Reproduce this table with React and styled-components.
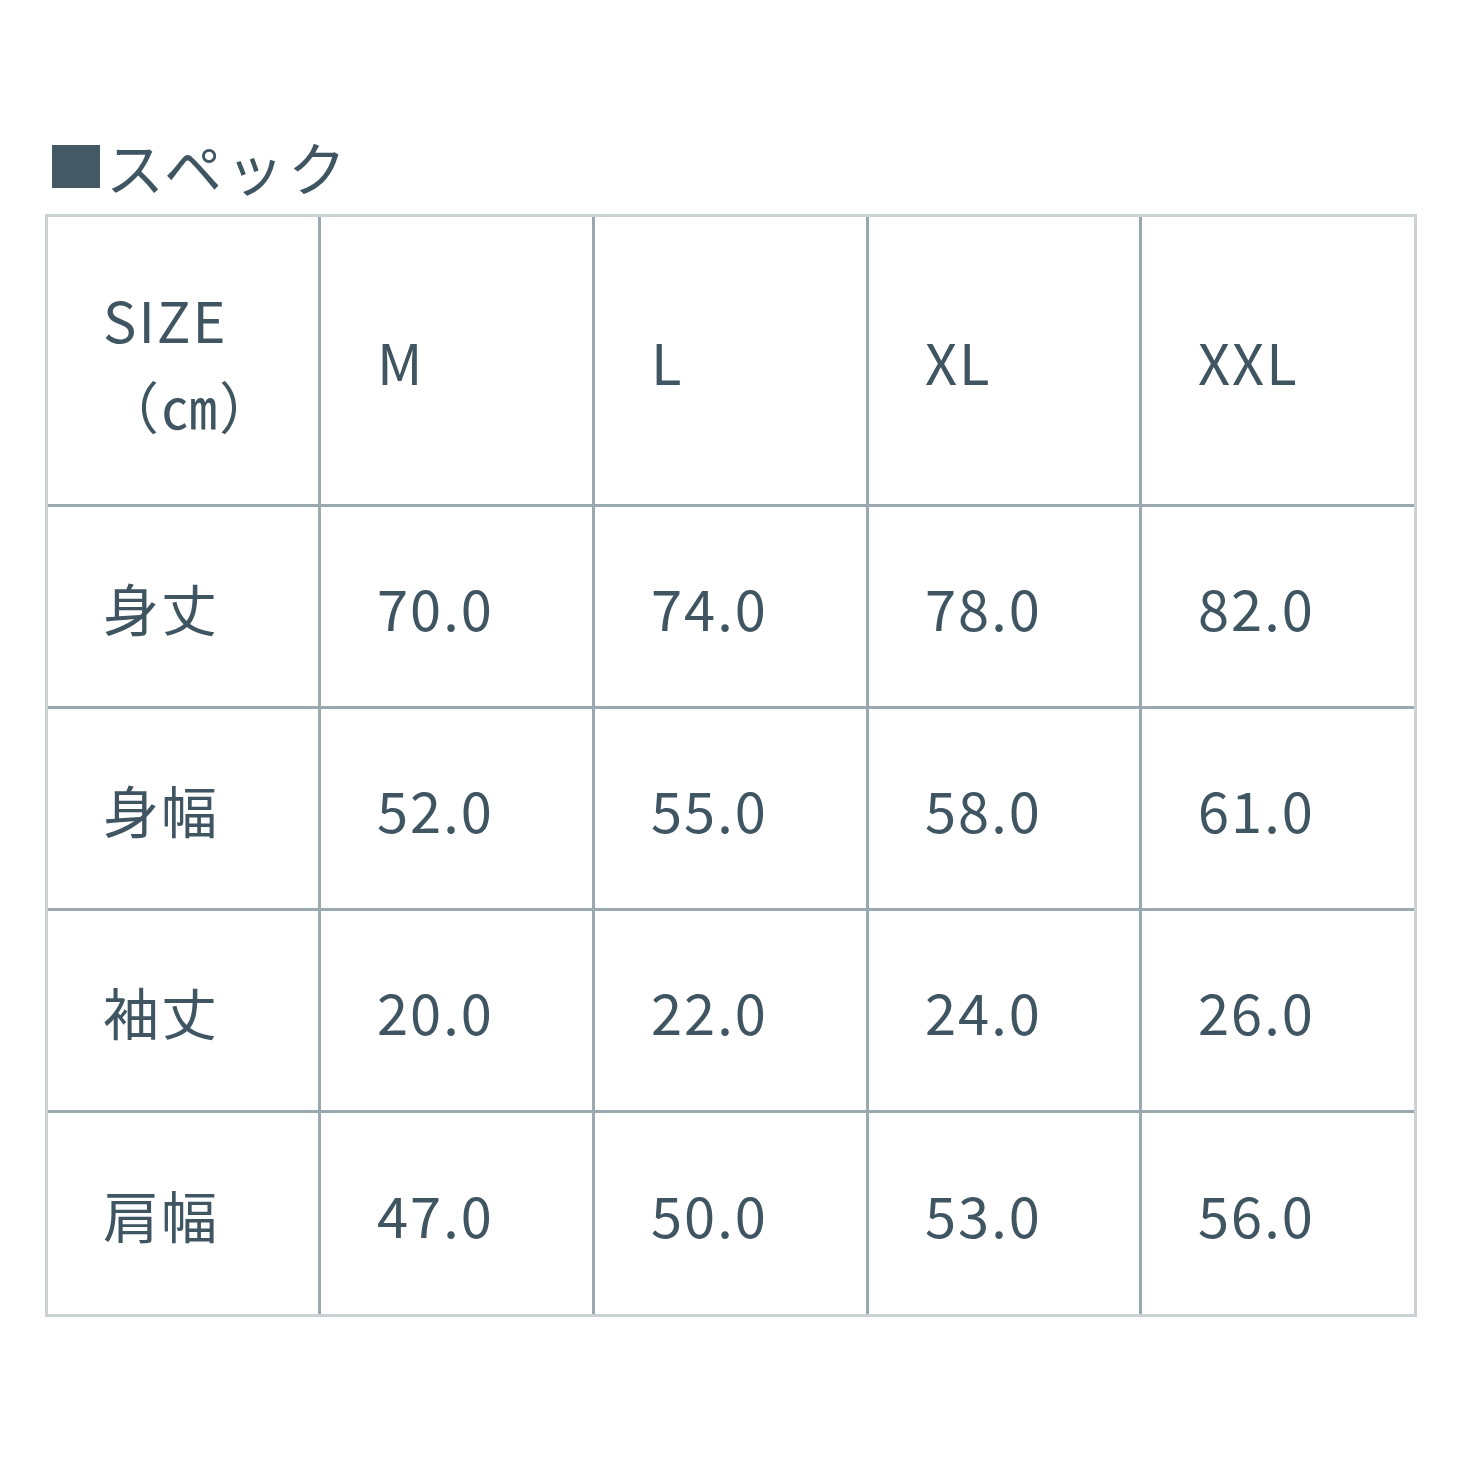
import React from 'react'
import styled, { createGlobalStyle } from 'styled-components'

const GlobalStyle = createGlobalStyle`
  html, body {
    margin: 0;
    padding: 0;
    background: #fff;
  }
  body {
    font-family: "Noto Sans CJK JP", "Noto Sans", sans-serif;
    color: #3f5561;
  }
`

const sizes = ['M', 'L', 'XL', 'XXL']

const rows = [
  { label: '身丈', values: ['70.0', '74.0', '78.0', '82.0'] },
  { label: '身幅', values: ['52.0', '55.0', '58.0', '61.0'] },
  { label: '袖丈', values: ['20.0', '22.0', '24.0', '26.0'] },
  { label: '肩幅', values: ['47.0', '50.0', '53.0', '56.0'] },
]

const App = () => {
  return (
    <>
      <GlobalStyle />
      <Page>
        <Heading>
          <Square />
          スペック
        </Heading>
        <Table>
          <Row $head>
            <Cell $first>
              <HeadLabel>
                SIZE
                <br />
                （㎝）
              </HeadLabel>
            </Cell>
            {sizes.map((s, i) => (
              <Cell key={s} $last={i === sizes.length - 1}>{s}</Cell>
            ))}
          </Row>
          {rows.map((row, r) => (
            <Row key={row.label} $bottom={r === rows.length - 1}>
              <Cell $first>{row.label}</Cell>
              {row.values.map((v, i) => (
                <Cell key={i} $last={i === row.values.length - 1}>{v}</Cell>
              ))}
            </Row>
          ))}
        </Table>
      </Page>
    </>
  )
}

const Page = styled.div`
  width: 1465px;
  height: 1465px;
  box-sizing: border-box;
  padding: 132px 48px 0 45px;
`

const Heading = styled.h2`
  display: flex;
  align-items: center;
  margin: 0 0 14px 0;
  font-size: 58px;
  font-weight: 400;
  line-height: 68px;
  letter-spacing: 4px;
  color: #3f5561;
`

const Square = styled.span`
  display: inline-block;
  width: 48px;
  height: 43px;
  margin: 0 6px 0 7px;
  background: #435a65;
`

const Table = styled.div`
  display: flex;
  flex-direction: column;
  width: 1372px;
  box-sizing: border-box;
  border: 3px solid #cbd2d6;
`

const Row = styled.div`
  display: grid;
  grid-template-columns: 273px 274px 274px 273px 272px;
  height: ${(p) => (p.$head ? '290px' : p.$bottom ? '201px' : '202px')};
  border-bottom: ${(p) => (p.$bottom ? 'none' : '3px solid #9aa8b0')};
  box-sizing: border-box;
`

const Cell = styled.div`
  display: flex;
  align-items: center;
  padding-left: ${(p) => (p.$first ? '55px' : '56px')};
  border-right: ${(p) => (p.$last ? 'none' : '3px solid #9aa8b0')};
  font-size: 56px;
  letter-spacing: 2px;
  color: #3f5561;
`

const HeadLabel = styled.div`
  line-height: 86px;
  margin-top: 2px;
`

export default App
